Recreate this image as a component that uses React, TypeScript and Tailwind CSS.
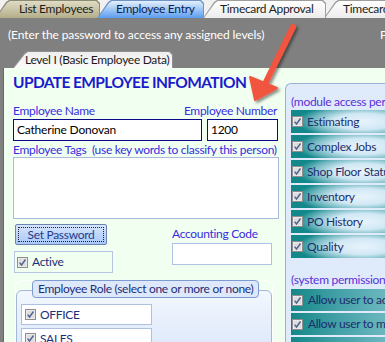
import React from "react";

const tabShape =
  "[clip-path:polygon(0_100%,11px_2px,14px_0,calc(100%_-_3px)_0,100%_3px,100%_100%)]";

function Tab({
  label,
  box,
  stroke,
  fill,
  text,
}: {
  label: string;
  box: string;
  stroke: string;
  fill: string;
  text: string;
}) {
  return (
    <div className={`relative h-[18px] shrink-0 ${box}`}>
      <div className={`absolute inset-0 ${stroke} ${tabShape}`} />
      <div className={`absolute left-[1px] right-[1px] top-[1px] bottom-0 ${fill} ${tabShape}`} />
      <span className={`relative block whitespace-nowrap pt-[1px] leading-[16px] ${text}`}>{label}</span>
    </div>
  );
}

function Check() {
  return (
    <svg width="11" height="11" viewBox="0 0 11 11" className="shrink-0">
      <rect x="0.5" y="0.5" width="10" height="10" fill="#f4f4f4" stroke="#8e8e8e" />
      <rect x="1.5" y="1.5" width="8" height="8" fill="#dedede" />
      <path d="M2.6 5.6 L4.5 8 L8.5 2.5" fill="none" stroke="#4e6391" strokeWidth="1.4" />
    </svg>
  );
}

const modules = ["Estimating", "Complex Jobs", "Shop Floor Status", "Inventory", "PO History", "Quality"];
const perms = ["Allow user to add new jobs", "Allow user to make changes", "Allow user to delete"];

export default function App() {
  return (
    <div className="relative w-[385px] h-[342px] overflow-hidden bg-[#808080] font-['Lato',sans-serif] text-[12px] tracking-[-0.3px]">
      {/* top tabs */}
      <div className="flex h-[18px] bg-[#f1f1f1]">
        <Tab
          label="List Employees"
          box="w-[105px] ml-[-5px] z-0"
          stroke="bg-[#8c8a72]"
          fill="bg-gradient-to-b from-[#e0dcc4] to-[#b3af8b]"
          text="pl-[24px] text-[#1d1d1d]"
        />
        <Tab
          label="Employee Entry"
          box="w-[107px] ml-[-3px] z-20"
          stroke="bg-[#6f93c6]"
          fill="bg-gradient-to-b from-[#e4effd] via-[#9ec6f6] to-[#5a9df0]"
          text="pl-[19px] text-[#0d1f4d]"
        />
        <Tab
          label="Timecard Approval"
          box="w-[123px] ml-[-1px] z-10"
          stroke="bg-[#9d9d9d]"
          fill="bg-gradient-to-b from-[#ffffff] to-[#ececec]"
          text="pl-[17px] text-[#1d1d1d]"
        />
        <Tab
          label="Timecard Entry"
          box="w-[90px] ml-[-2px] z-0"
          stroke="bg-[#9d9d9d]"
          fill="bg-gradient-to-b from-[#ffffff] to-[#ececec]"
          text="pl-[19px] text-[#1d1d1d]"
        />
      </div>

      {/* gray header */}
      <div className="flex flex-col h-[50px]">
        <div className="flex pt-[9px] pl-[8px] leading-[16px] text-white tracking-[-0.1px]">
          <span className="whitespace-nowrap">(Enter the password to access any assigned levels)</span>
          <span className="ml-auto w-[5px] whitespace-nowrap">Password</span>
        </div>
        <div className="relative mt-auto ml-[13px] w-[160px] h-[17px]">
          <div className={`absolute inset-0 bg-[#8f8f8f] ${tabShape}`} />
          <div className={`absolute left-[1px] right-[1px] top-[1px] bottom-0 bg-gradient-to-b from-[#eeeeee] to-[#fbfbfb] ${tabShape}`} />
          <span className="relative block whitespace-nowrap pl-[12px] pt-[1px] leading-[16px] text-[#1b1b1b]">
            Level I (Basic Employee Data)
          </span>
        </div>
      </div>

      {/* green tab body */}
      <div className="flex ml-[3px] h-[274px] bg-[#f0fff0] border-l border-[#676767]">
        {/* left column */}
        <div className="w-[280px] shrink-0 pl-[9px]">
          <h1 className="mt-[4px] text-[15.5px] leading-[20px] font-bold text-[#1b1bcc] whitespace-nowrap tracking-[-0.6px]">
            UPDATE EMPLOYEE INFOMATION
          </h1>
          <div className="mt-[12px] flex justify-between w-[264px] leading-[14px] text-[#3a2ce0]">
            <span>Employee Name</span>
            <span>Employee Number</span>
          </div>
          <div className="mt-[1px] flex gap-[5px]">
            <div className="w-[189px] h-[22px] bg-white border border-[#0b0b8a] pl-[3px] leading-[20px] text-black tracking-[-0.2px]">
              Catherine Donovan
            </div>
            <div className="w-[71px] h-[22px] bg-white border border-[#0b0b8a] pl-[3px] leading-[20px] text-black">
              1200
            </div>
          </div>
          <div className="mt-[2px] leading-[14px] text-[#3a2ce0] whitespace-pre">
            Employee Tags  (use key words to classify this person)
          </div>
          <div className="w-[266px] h-[62px] bg-white border border-[#a9badb]" />

          <div className="mt-[5px] flex">
            <div className="w-[159px] shrink-0 flex flex-col">
              <div className="ml-[2px] w-[92px] h-[21px] rounded-[2px] border border-[#6c84b2] bg-gradient-to-b from-[#d6e5fd] to-[#a9c8f8] p-[2px]">
                <div className="h-full border border-dotted border-[#222] flex items-center justify-center leading-[14px] text-[#1e3c8a]">
                  Set Password
                </div>
              </div>
              <div className="mt-[6px] ml-[1px] w-[99px] h-[22px] border border-[#b6c6e2] flex items-center gap-[4px] pl-[2px] text-[#1c2f78]">
                <Check />
                <span>Active</span>
              </div>
            </div>
            <div className="flex flex-col">
              <span className="mt-[3px] leading-[14px] text-[#3a2ce0]">Accounting Code</span>
              <div className="mt-[2px] w-[100px] h-[22px] bg-white border border-[#b0c1e1]" />
            </div>
          </div>

          {/* Employee Role group */}
          <div className="relative mt-[7px] ml-[2px] w-[258px] pt-[9px] border-t border-l border-r border-white rounded-t-[8px]">
            <div className="h-[70px] border border-[#a3b7dc] rounded-t-[6px] bg-gradient-to-b from-[#f3f7fe] to-[#d9e6fa] pl-[4px] pt-[13px] flex flex-col gap-[3px]">
              {["OFFICE", "SALES"].map((r) => (
                <div
                  key={r}
                  className="w-[131px] h-[21px] shrink-0 bg-white border border-[#aebfe0] flex items-center gap-[4px] pl-[3px] text-[#1c2f78]"
                >
                  <Check />
                  <span>{r}</span>
                </div>
              ))}
            </div>
            <div className="absolute top-[-1px] left-[16px] h-[18px] px-[5px] border border-[#7d9bd0] rounded-[4px] bg-[#dde8fb] leading-[16px] text-[#1e2e78] whitespace-nowrap">
              Employee Role (select one or more or none)
            </div>
          </div>
        </div>

        {/* right column */}
        <div className="w-[110px] shrink-0 mt-[15px] ml-[1px] border-l border-t border-[#9cb0d8] rounded-tl-[6px] bg-[#dfeafb] pl-[5px]">
          <div className="pt-[11px] leading-[14px] text-[#5a30d8] whitespace-nowrap">(module access permissions)</div>
          <div className="mt-[1px] flex flex-col gap-[2px]">
            {modules.map((m) => (
              <div
                key={m}
                className="h-[23px] flex items-center gap-[4px] pl-[1px] bg-[radial-gradient(75px_20px_at_72px_50%,#e8f3fc_0%,#d0e8f4_40%,#6eb6be_68%,#13888a_88%)] text-[#1d2e6c] whitespace-nowrap"
              >
                <Check />
                <span>{m}</span>
              </div>
            ))}
          </div>
          <div className="mt-[15px] leading-[14px] text-[#5a30d8] whitespace-nowrap">(system permissions)</div>
          <div className="mt-[2px] flex flex-col gap-[2px]">
            {perms.map((p) => (
              <div
                key={p}
                className="h-[22px] flex items-center gap-[5px] pl-[1px] bg-[linear-gradient(90deg,#138787_0%,#3e9ea4_40%,#74bcc4_100%)] text-[#1d2e6c] whitespace-nowrap"
              >
                <Check />
                <span>{p}</span>
              </div>
            ))}
          </div>
        </div>
      </div>

      {/* red annotation arrow */}
      <svg className="absolute left-0 top-0 pointer-events-none" width="385" height="342">
        <defs>
          <filter id="sh" x="-20%" y="-20%" width="140%" height="140%">
            <feDropShadow dx="2" dy="2" stdDeviation="1.5" floodColor="#000" floodOpacity="0.45" />
          </filter>
        </defs>
        <g filter="url(#sh)">
          <line x1="293" y1="27" x2="265" y2="84" stroke="#f1543f" strokeWidth="6" strokeLinecap="round" />
          <polygon points="255,100 250,77 277,88" fill="#f1543f" strokeLinejoin="round" stroke="#f1543f" strokeWidth="2" />
        </g>
      </svg>
    </div>
  );
}
